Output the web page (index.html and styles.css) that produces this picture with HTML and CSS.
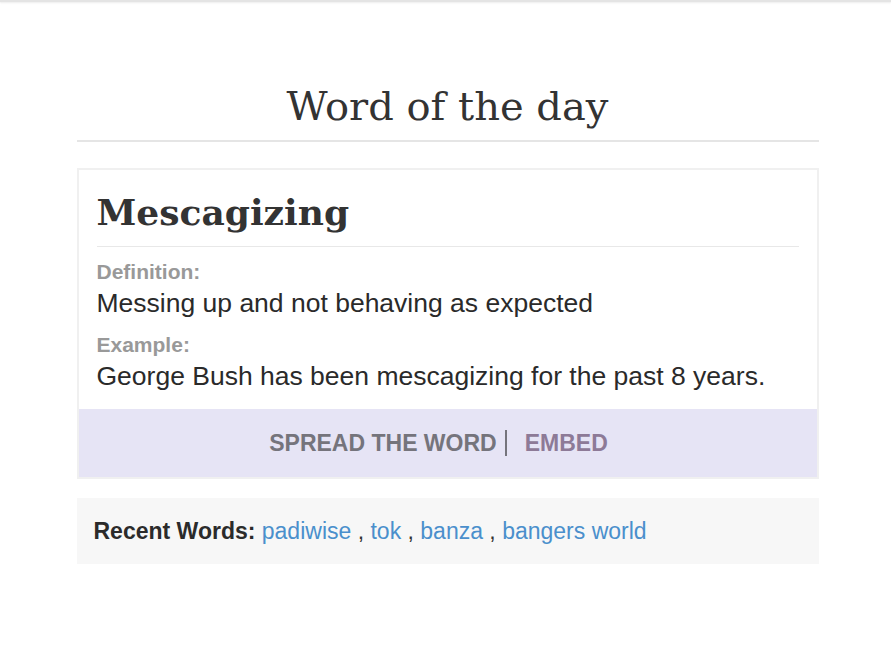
FILE: index.html
```html
<!DOCTYPE html>
<html>
<head>
<meta charset="utf-8">
<link rel="stylesheet" href="styles.css">
</head>
<body>
<div class="topbar"></div>
<main class="page">
  <h1 class="title">Word of the day</h1>
  <section class="card">
    <div class="card-body">
      <h2 class="word">Mescagizing</h2>
      <div class="label first">Definition:</div>
      <div class="text">Messing up and not behaving as expected</div>
      <div class="label">Example:</div>
      <div class="text">George Bush has been mescagizing for the past 8 years.</div>
    </div>
    <div class="card-foot">
      <span class="spread">SPREAD THE WORD</span><span class="sep"></span><span class="embed">EMBED</span>
    </div>
  </section>
  <section class="recent"><b>Recent Words:</b> <a href="#">padiwise</a> , <a href="#">tok</a> , <a href="#">banza</a> , <a href="#">bangers world</a></section>
</main>
</body>
</html>
```

FILE: styles.css
```css
html, body {
  margin: 0;
  padding: 0;
  background: #fff;
}
body {
  font-family: "Liberation Sans", Arial, sans-serif;
  color: #333;
}
.topbar {
  height: 2px;
  background: #e4e4e4;
  box-shadow: 0 1px 2px rgba(0,0,0,0.08);
}
.page {
  width: 742px;
  margin: 0 auto;
  padding-top: 80px;
  box-sizing: border-box;
  position: relative;
  left: 2px;
}
.title {
  font-family: "DejaVu Serif", "Liberation Serif", serif;
  font-weight: normal;
  font-size: 40px;
  line-height: 48px;
  text-align: center;
  margin: 0;
  padding-bottom: 10px;
  color: #333;
  border-bottom: 2px solid #e5e5e5;
}
.card {
  margin-top: 26px;
  border: 2px solid #f0f0f0;
}
.card-body {
  padding: 14px 18px 18px;
}
.word {
  font-family: "DejaVu Serif", "Liberation Serif", serif;
  font-weight: bold;
  font-size: 36px;
  line-height: 56px;
  margin: 0;
  padding-bottom: 6px;
  border-bottom: 1px solid #e8e8e8;
  color: #333;
}
.label {
  font-weight: bold;
  color: #999;
  font-size: 21px;
  line-height: 24px;
  margin-top: 15px;
}
.label.first {
  margin-top: 13px;
}
.label + .text {
  margin-top: 4px;
}
.text {
  font-size: 26.5px;
  line-height: 30px;
  color: #2a2a2a;
}
.card-foot {
  background: #e6e4f5;
  height: 68px;
  display: flex;
  align-items: center;
  justify-content: center;
  font-weight: bold;
  font-size: 23px;
}
.spread { color: #75747c; }
.sep {
  width: 2px;
  height: 26px;
  background: #75747c;
  margin: 0 18px 0 8px;
}
.embed {
  color: #8d7a97;
  margin-right: 18px;
}
.recent {
  margin-top: 19px;
  background: #f7f7f7;
  height: 66px;
  line-height: 66px;
  padding-left: 17px;
  font-size: 23px;
  color: #333;
  white-space: nowrap;
}
.recent b { color: #2b2b2b; }
.recent a {
  color: #4a8fcc;
  text-decoration: none;
}
```
